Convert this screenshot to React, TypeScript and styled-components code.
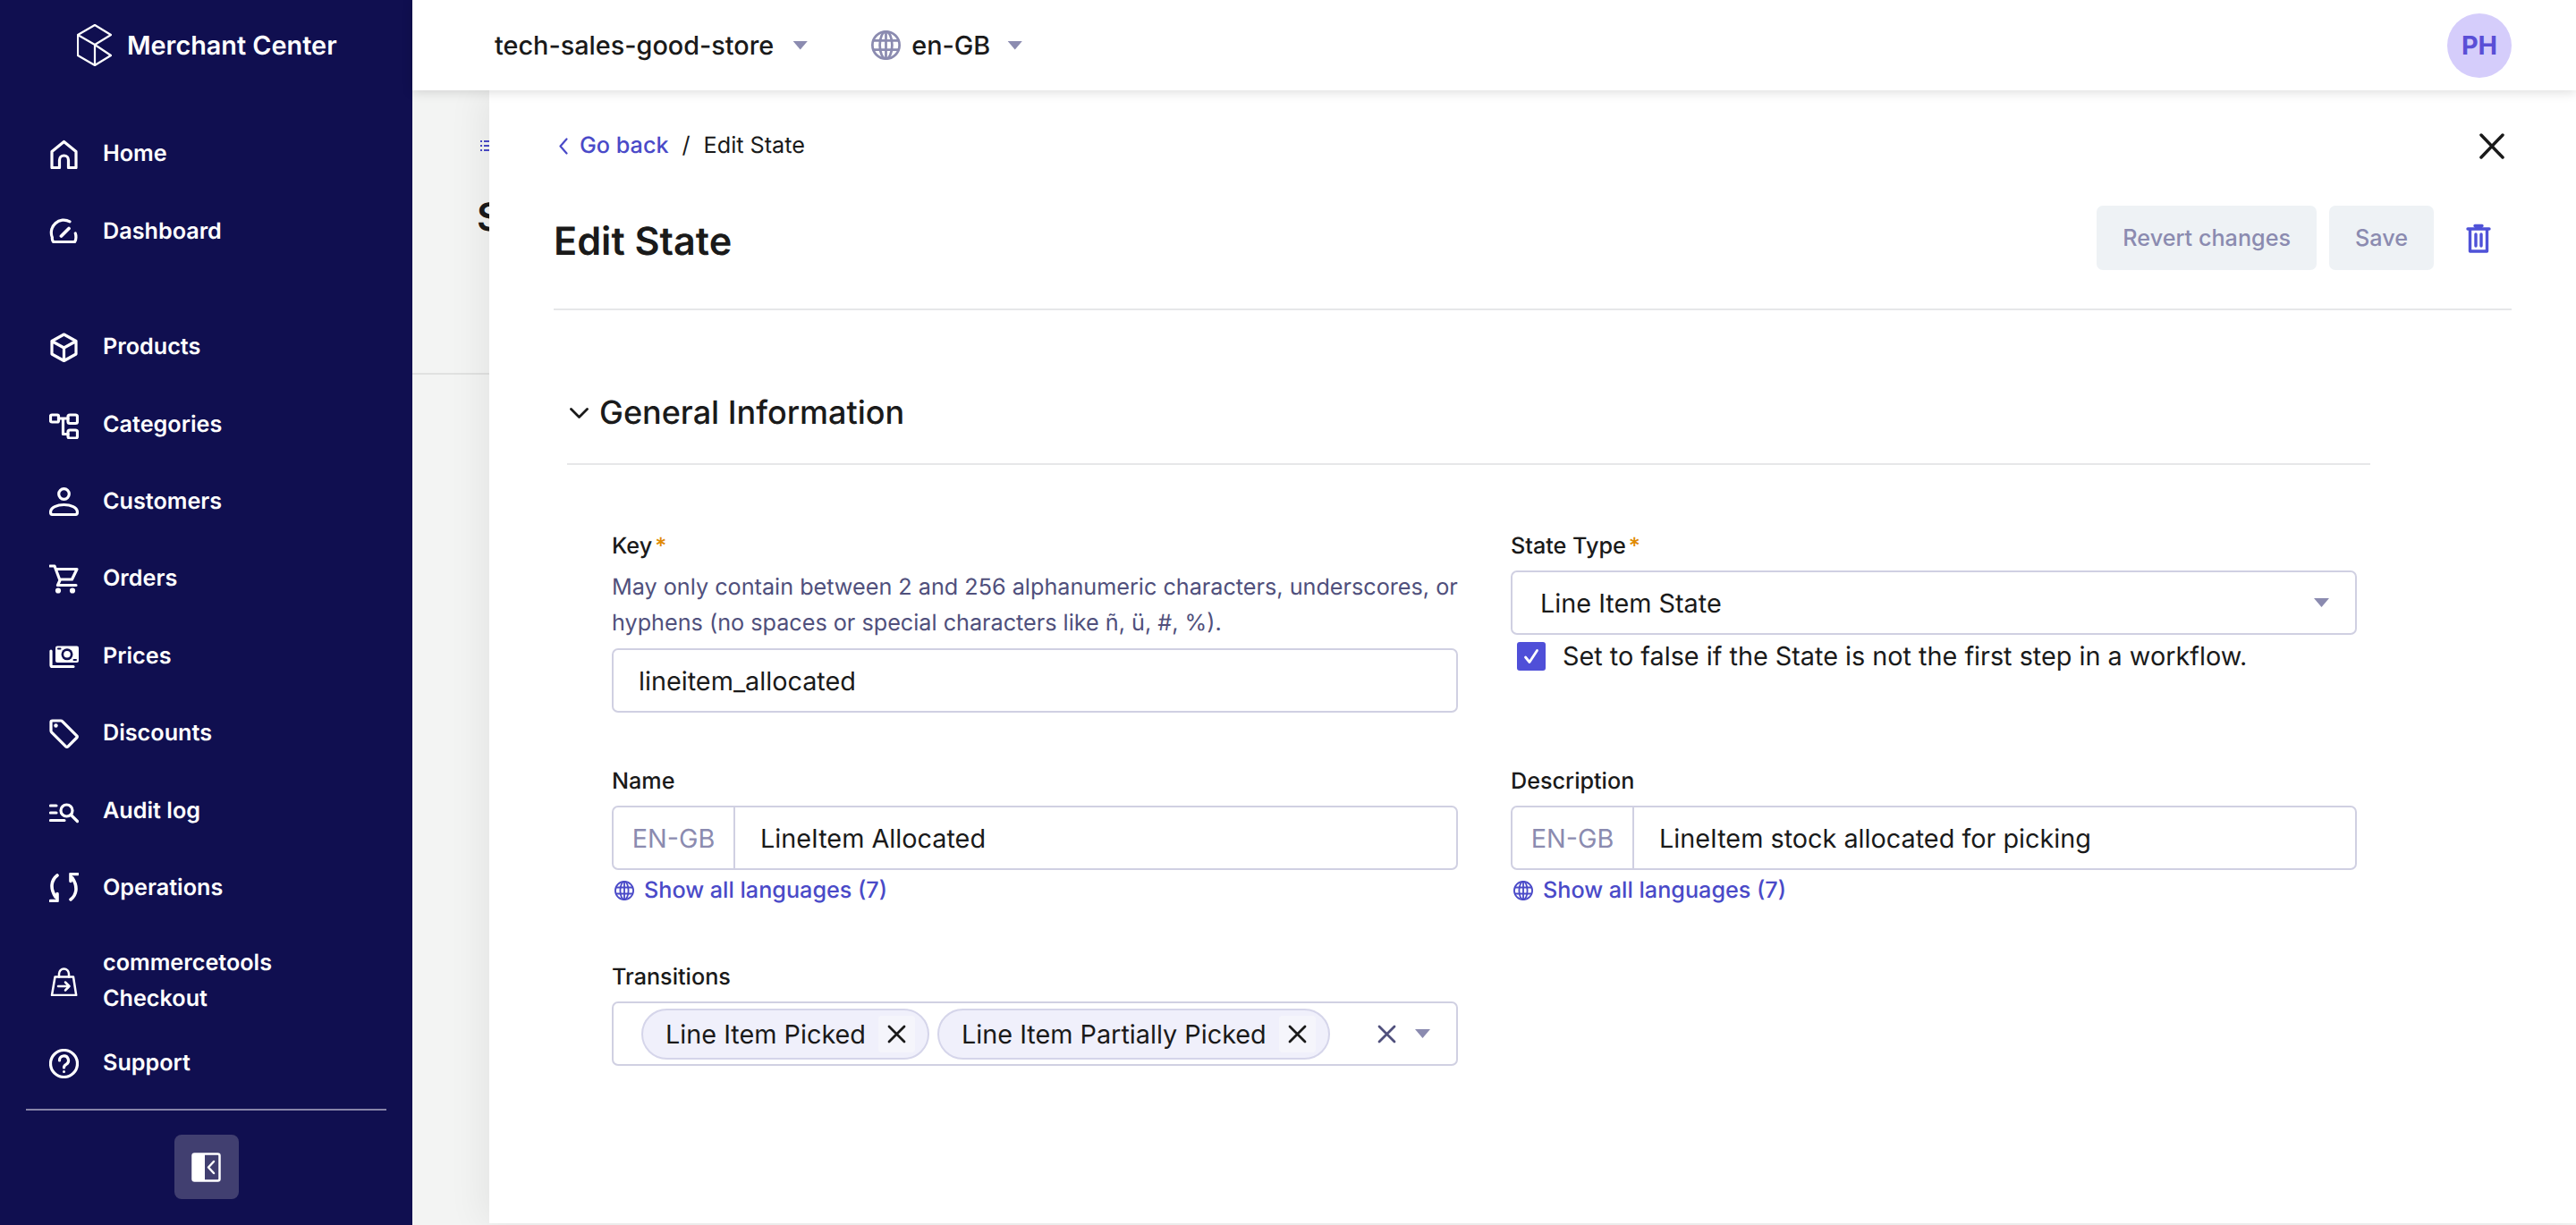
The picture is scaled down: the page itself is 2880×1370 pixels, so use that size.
import React from 'react';
import styled, { createGlobalStyle } from 'styled-components';

const GlobalStyle = createGlobalStyle`
  html, body {
    margin: 0;
    padding: 0;
    background: #f3f4f3;
  }
  * {
    box-sizing: border-box;
  }
  body {
    font-family: Inter, "Noto Sans", sans-serif;
    color: #1a1a1a;
    text-rendering: geometricPrecision;
    -webkit-font-smoothing: antialiased;
  }
`;

const Shell = styled.div`
  display: flex;
  width: 2880px;
  height: 1370px;
  overflow: hidden;
`;

const Sidebar = styled.aside`
  display: flex;
  flex: 0 0 461px;
  flex-direction: column;
  background: #100f50;
  color: #fff;
`;
const Brand = styled.div`
  display: flex;
  align-items: center;
  gap: 17px;
  height: 101px;
  padding-left: 86px;
`;
const BrandName = styled.span`
  font-size: 28.8px;
  font-weight: 600;
`;
const NavGroup = styled.nav<{ $top: number }>`
  display: flex;
  flex-direction: column;
  margin-top: ${(p) => p.$top}px;
`;
const NavRow = styled.a<{ $height?: number; $top?: number }>`
  display: flex;
  align-items: center;
  gap: 27px;
  height: ${(p) => p.$height ?? 86.4}px;
  margin-top: ${(p) => p.$top ?? 0}px;
  padding-left: 55px;
  font-size: 25.2px;
  font-weight: 600;
  line-height: 40px;
`;
const NavIcon = styled.svg`
  flex: none;
  width: 33px;
  height: 33px;
  fill: none;
  stroke: #fff;
  stroke-width: 3.2;
  stroke-linecap: round;
  stroke-linejoin: round;
`;
const SidebarFoot = styled.div`
  display: flex;
  justify-content: center;
  margin: 8px 29px 0;
  padding-top: 27px;
  border-top: 2px solid #8784a8;
`;
const CollapseButton = styled.button`
  display: flex;
  align-items: center;
  justify-content: center;
  width: 72px;
  height: 72px;
  padding: 0;
  border: 0;
  border-radius: 8px;
  background: #413f70;
`;

const Column = styled.div`
  display: flex;
  flex: 1;
  flex-direction: column;
  min-width: 0;
`;
const Header = styled.header`
  position: relative;
  z-index: 2;
  display: flex;
  flex: 0 0 101px;
  align-items: center;
  padding: 0 72px 0 92px;
  background: #fff;
  box-shadow: 0 2px 12px rgba(0, 0, 0, 0.14);
`;
const HeaderPicker = styled.div<{ $left?: number }>`
  display: flex;
  align-items: center;
  margin-left: ${(p) => p.$left ?? 0}px;
  font-size: 28.8px;
  font-weight: 500;
`;
const PickerLabel = styled.span`
  margin: 0 19px 0 12px;
`;
const StoreLabel = styled.span`
  margin-right: 21px;
`;
const Caret = styled.span`
  flex: none;
  width: 17px;
  height: 10px;
  background: #8b8bb0;
  clip-path: polygon(0 0, 100% 0, 50% 100%);
`;
const Avatar = styled.div`
  display: flex;
  align-items: center;
  justify-content: center;
  width: 72px;
  height: 72px;
  margin-left: auto;
  border-radius: 50%;
  background: #d5cdfb;
  color: #5a4fd6;
  font-size: 28.8px;
  font-weight: 700;
`;

const Main = styled.main`
  position: relative;
  flex: 1;
  min-height: 0;
`;
const PageBehind = styled.div`
  height: 318px;
  padding: 52px 0 0 76px;
  border-bottom: 2px solid #e0e1e0;
`;
const PageTitle = styled.div`
  margin: 44px 0 0 -4px;
  font-size: 43.2px;
  font-weight: 600;
`;
const Modal = styled.section`
  position: absolute;
  top: 0;
  right: 0;
  bottom: 2px;
  left: 86px;
  padding: 42px 72px 0;
  background: #fff;
  box-shadow: -6px 0 40px rgba(0, 0, 0, 0.07);
`;
const CloseButton = styled.svg`
  position: absolute;
  top: 48px;
  right: 80px;
  width: 28px;
  height: 29px;
  stroke: #1a1a1a;
  stroke-width: 3.5;
  stroke-linecap: round;
`;
const Breadcrumbs = styled.div`
  display: flex;
  align-items: center;
  height: 40px;
  padding-left: 6px;
  font-size: 25.2px;
  font-weight: 400;
`;
const BackLink = styled.a`
  display: flex;
  align-items: center;
  gap: 13px;
  color: #4a4ac8;
  font-weight: 500;
`;
const Crumb = styled.span`
  margin-left: 15px;
`;
const TitleRow = styled.div`
  display: flex;
  align-items: center;
  height: 164px;
  padding: 4px 23px 0 0;
  border-bottom: 2px solid #e6e7e9;
`;
const Title = styled.h1`
  flex: 1;
  margin: 8px 0 0;
  font-size: 43.2px;
  font-weight: 600;
`;
const GhostButton = styled.button`
  height: 72px;
  margin-right: 14px;
  padding: 0 29px;
  border: 0;
  border-radius: 7px;
  background: #eef2f5;
  color: #8b8bb0;
  font-family: inherit;
  font-size: 25.2px;
  font-weight: 500;
`;
const TrashIcon = styled.svg`
  width: 28px;
  height: 33px;
  margin-left: 22px;
  fill: none;
  stroke: #4f52d8;
  stroke-width: 3.4;
  stroke-linecap: round;
  stroke-linejoin: round;
`;

const Section = styled.div`
  margin: 0 158px 0 15px;
`;
const SectionHead = styled.div`
  display: flex;
  align-items: center;
  gap: 12px;
  height: 173px;
  padding: 56px 0 0 3px;
  border-bottom: 2px solid #e6e7e9;
`;
const SectionChevron = styled.svg`
  width: 21px;
  height: 12px;
  margin-top: 2px;
  fill: none;
  stroke: #1a1a1a;
  stroke-width: 2.8;
  stroke-linecap: round;
  stroke-linejoin: round;
`;
const SectionTitle = styled.h2`
  margin: 0;
  font-size: 36px;
  font-weight: 500;
`;
const FormGrid = styled.div`
  display: grid;
  grid-template-columns: 946px 946px;
  column-gap: 59px;
  row-gap: 57px;
  align-items: start;
  padding: 71px 0 0 50px;
`;
const Field = styled.div`
  display: flex;
  flex-direction: column;
`;
const Label = styled.label`
  height: 40px;
  margin-bottom: 7px;
  font-size: 25.2px;
  font-weight: 500;
  line-height: 40px;
`;
const Required = styled.span`
  margin-left: 3px;
  color: #e08a00;
`;
const HelpText = styled.p`
  margin: -1px 0 8px;
  color: #50507c;
  font-size: 25.2px;
  line-height: 40px;
`;
const InputBox = styled.div`
  display: flex;
  align-items: center;
  height: 72px;
  border: 2px solid #d0d0e2;
  border-radius: 7px;
  background: #fff;
  font-size: 28.8px;
  color: #1a1a1a;
`;
const TextInput = styled(InputBox)`
  padding: 0 28px;
`;
const SelectInput = styled(InputBox)`
  justify-content: space-between;
  padding: 0 29px 0 31px;
`;
const LocaleTag = styled.span`
  display: flex;
  flex: 0 0 136px;
  align-items: center;
  justify-content: center;
  height: 100%;
  border-right: 2px solid #d0d0e2;
  color: #8b8bb0;
`;
const LocaleValue = styled.span`
  padding-left: 28px;
`;
const LanguagesLink = styled.a`
  display: flex;
  align-items: center;
  gap: 11px;
  height: 41px;
  margin-top: 2px;
  padding-left: 3px;
  color: #4a4ac8;
  font-size: 25.2px;
  font-weight: 500;
`;
const CheckRow = styled.div`
  display: flex;
  align-items: center;
  gap: 19px;
  margin-top: 6px;
  padding-left: 7px;
  font-size: 28.8px;
`;
const CheckBox = styled.span`
  display: flex;
  flex: none;
  align-items: center;
  justify-content: center;
  width: 32px;
  height: 32px;
  border-radius: 3px;
  background: #4f4fd8;
`;
const ChipsInput = styled(InputBox)`
  gap: 9px;
  padding: 0 29px 0 31px;
`;
const Chip = styled.span`
  display: flex;
  align-items: center;
  gap: 14px;
  height: 57px;
  padding: 0 14px 0 25px;
  border: 2px solid #d5d5ea;
  border-radius: 29px;
  background: #f0f0fb;
`;
const ChipRemove = styled.span`
  display: flex;
  align-items: center;
  justify-content: center;
  width: 41px;
  height: 41px;
  border-radius: 4px;
  background: #f5f5fb;
`;
const ChipControls = styled.div`
  display: flex;
  align-items: center;
  gap: 21px;
  margin-left: auto;
`;
const XIcon = styled.svg<{ $color?: string }>`
  flex: none;
  width: 21px;
  height: 21px;
  stroke: ${(p) => p.$color ?? '#1a1a1a'};
  stroke-width: 2.8;
  stroke-linecap: round;
`;

function Globe({ size, color }: { size: number; color: string }) {
  return (
    <svg width={size} height={size} viewBox="0 0 24 24" fill="none" stroke={color} strokeWidth="2">
      <circle cx="12" cy="12" r="11" />
      <ellipse cx="12" cy="12" rx="5" ry="11" />
      <path d="M1.5 8.2h21M1.5 15.8h21M12 1v22" />
    </svg>
  );
}

function Cross() {
  return <path d="M2 2l17 17M19 2L2 19" />;
}

const dark = '#100f50';

const navIcons: Record<string, React.ReactNode> = {
  home: <path d="M3 31.5V13.5L16.5 2.5 30 13.5v18h-8.5V23a5 5 0 0 0-10 0v8.5z" />,
  dashboard: (
    <>
      <path d="M23 5.8A14 14 0 0 0 3.4 23.5q-.4 2.6 1.1 5h24q1.6-2.4 1.4-5.5 0-2.5-.6-4" />
      <path d="M13.5 22L22 13.5" strokeWidth="3.8" />
    </>
  ),
  products: <path d="M16.5 2L30 9.5V24l-13.5 7.5L3 24V9.5zM3 9.5l13.5 7.5L30 9.5M16.5 17v14.5" />,
  categories: (
    <>
      <rect x="1.5" y="6" width="9" height="8" rx="1.5" />
      <rect x="21" y="6" width="10.5" height="9.5" rx="2" />
      <rect x="21" y="23" width="10.5" height="9" rx="2" />
      <path d="M10.5 10H21M15.5 10v17.5H21" />
    </>
  ),
  customers: (
    <>
      <circle cx="16.5" cy="8.5" r="5.8" />
      <path d="M4 31.5q-2.5 0-2.5-2.5c0-5.5 7.5-8.5 15-8.5s15 3 15 8.5q0 2.5-2.5 2.5z" />
    </>
  ),
  orders: (
    <>
      <path d="M1 2h5l6 16-2.5 5.5H30M7.5 5.5H31L25.5 17H12" />
      <circle cx="10" cy="29.5" r="1.5" fill="#fff" />
      <circle cx="26" cy="29.5" r="1.5" fill="#fff" />
    </>
  ),
  prices: (
    <>
      <rect x="7" y="5.5" width="26" height="18.5" rx="2" fill="#fff" stroke="none" />
      <circle cx="20" cy="14.8" r="6.5" fill={dark} stroke="none" />
      <circle cx="20" cy="14.8" r="3.8" fill="#fff" stroke="none" />
      <path d="M10 8.5h2.5M27.5 21h2.5" stroke={dark} strokeWidth="2" />
      <path d="M2 11v16q0 1.5 1.5 1.5H27" />
    </>
  ),
  discounts: (
    <>
      <path d="M2 3.5Q2 2 3.5 2H13q1 0 1.8.8l16 16q1 1.2 0 2.2L21 30.8q-1.2 1.2-2.4 0l-16-16Q2 14 2 13z" />
      <circle cx="7.5" cy="7.5" r="2.2" fill="#fff" stroke="none" />
    </>
  ),
  audit: (
    <>
      <path d="M1.5 11H8M1.5 19H8M1.5 27.5H17" />
      <circle cx="19.5" cy="16.5" r="6.5" />
      <path d="M24.5 21.5L31.5 28.5" />
    </>
  ),
  operations: (
    <>
      <path d="M9 3C2.5 8 .5 17 7 27M1.5 31.5H9V23.5" strokeWidth="3.6" />
      <path d="M24 30c6.5-5 8.5-14 2-24M31.5 1.5H24v8" strokeWidth="3.6" />
    </>
  ),
  checkout: (
    <g strokeWidth="2.5">
      <path d="M11 11.5V8a5.5 5.5 0 0 1 11 0v3.5" />
      <path d="M6.5 11.5h20.5l3.2 20.5H3z" />
      <path d="M10 22h12.5M18 17.5l4.5 4.5-4.5 4.5" />
    </g>
  ),
  support: (
    <>
      <circle cx="16.5" cy="16.5" r="15" />
      <path d="M11.5 13a5 5 0 1 1 7.5 4.3c-1.8 1-2.5 2-2.5 3.7" />
      <circle cx="16.5" cy="25.5" r="1.5" fill="#fff" stroke="none" />
    </>
  ),
};

const firstGroup = [
  { icon: 'home', label: 'Home' },
  { icon: 'dashboard', label: 'Dashboard' },
];
const secondGroup = [
  { icon: 'products', label: 'Products' },
  { icon: 'categories', label: 'Categories' },
  { icon: 'customers', label: 'Customers' },
  { icon: 'orders', label: 'Orders' },
  { icon: 'prices', label: 'Prices' },
  { icon: 'discounts', label: 'Discounts' },
  { icon: 'audit', label: 'Audit log' },
  { icon: 'operations', label: 'Operations' },
];

function NavItem({ icon, label }: { icon: string; label: string }) {
  return (
    <NavRow>
      <NavIcon viewBox="0 0 33 33">{navIcons[icon]}</NavIcon>
      <span>{label}</span>
    </NavRow>
  );
}

function Side() {
  return (
    <Sidebar>
      <Brand>
        <svg width="39" height="47" viewBox="0 0 39 47" fill="none" stroke="#fff" strokeWidth="2.2" strokeLinejoin="round">
          <path d="M20 1l18 11-18 11L1 12zM1 12v23l19 11 18-11-18-12v23" />
        </svg>
        <BrandName>Merchant Center</BrandName>
      </Brand>
      <NavGroup $top={28}>
        {firstGroup.map((item) => (
          <NavItem key={item.label} {...item} />
        ))}
      </NavGroup>
      <NavGroup $top={43.2}>
        {secondGroup.map((item) => (
          <NavItem key={item.label} {...item} />
        ))}
        <NavRow $height={98} $top={12}>
          <NavIcon viewBox="0 0 33 33">{navIcons.checkout}</NavIcon>
          <span>
            commercetools
            <br />
            Checkout
          </span>
        </NavRow>
        <NavItem icon="support" label="Support" />
      </NavGroup>
      <SidebarFoot>
        <CollapseButton>
          <svg width="33" height="33" viewBox="0 0 33 33" fill="none" stroke="#fff" strokeWidth="2.5" strokeLinecap="round" strokeLinejoin="round">
            <rect x="1.5" y="1.5" width="30" height="30" rx="2" />
            <rect x="1" y="1" width="14" height="31" rx="1.5" fill="#fff" stroke="none" />
            <path d="M25 10l-6 6.5 6 6.5" />
          </svg>
        </CollapseButton>
      </SidebarFoot>
    </Sidebar>
  );
}

function TopBar() {
  return (
    <Header>
      <HeaderPicker>
        <StoreLabel>tech-sales-good-store</StoreLabel>
        <Caret />
      </HeaderPicker>
      <HeaderPicker $left={71}>
        <Globe size={33} color="#8b8bb0" />
        <PickerLabel>en-GB</PickerLabel>
        <Caret />
      </HeaderPicker>
      <Avatar>PH</Avatar>
    </Header>
  );
}

function LocalizedField({ label, value }: { label: string; value: string }) {
  return (
    <Field>
      <Label>{label}</Label>
      <InputBox>
        <LocaleTag>EN-GB</LocaleTag>
        <LocaleValue>{value}</LocaleValue>
      </InputBox>
      <LanguagesLink>
        <Globe size={22} color="#4a4ac8" />
        Show all languages (7)
      </LanguagesLink>
    </Field>
  );
}

function EditStateForm() {
  return (
    <FormGrid>
      <Field>
        <Label>
          Key<Required>*</Required>
        </Label>
        <HelpText>
          May only contain between 2 and 256 alphanumeric characters, underscores, or hyphens (no spaces or special
          characters like ñ, ü, #, %).
        </HelpText>
        <TextInput>lineitem_allocated</TextInput>
      </Field>
      <Field>
        <Label>
          State Type<Required>*</Required>
        </Label>
        <SelectInput>
          Line Item State
          <Caret />
        </SelectInput>
        <CheckRow>
          <CheckBox>
            <svg width="20" height="20" viewBox="0 0 20 20" fill="none" stroke="#fff" strokeWidth="2.8" strokeLinecap="round" strokeLinejoin="round">
              <path d="M3.5 11l4.5 5.5L16.5 3.5" />
            </svg>
          </CheckBox>
          Set to false if the State is not the first step in a workflow.
        </CheckRow>
      </Field>
      <LocalizedField label="Name" value="LineItem Allocated" />
      <LocalizedField label="Description" value="LineItem stock allocated for picking" />
      <Field>
        <Label>Transitions</Label>
        <ChipsInput>
          {['Line Item Picked', 'Line Item Partially Picked'].map((chip) => (
            <Chip key={chip}>
              {chip}
              <ChipRemove>
                <XIcon viewBox="0 0 21 21">
                  <Cross />
                </XIcon>
              </ChipRemove>
            </Chip>
          ))}
          <ChipControls>
            <XIcon viewBox="0 0 21 21" $color="#50507c">
              <Cross />
            </XIcon>
            <Caret />
          </ChipControls>
        </ChipsInput>
      </Field>
    </FormGrid>
  );
}

function EditStateModal() {
  return (
    <Modal>
      <CloseButton viewBox="0 0 28 29">
        <path d="M2 2l24 25M26 2L2 27" />
      </CloseButton>
      <Breadcrumbs>
        <BackLink>
          <svg width="10" height="19" viewBox="0 0 10 19" fill="none" stroke="#4a4ac8" strokeWidth="2.2" strokeLinecap="round" strokeLinejoin="round">
            <path d="M8.5 1.5L1.5 9.5l7 8" />
          </svg>
          Go back
        </BackLink>
        <Crumb>/</Crumb>
        <Crumb>Edit State</Crumb>
      </Breadcrumbs>
      <TitleRow>
        <Title>Edit State</Title>
        <GhostButton>Revert changes</GhostButton>
        <GhostButton>Save</GhostButton>
        <TrashIcon viewBox="0 0 28 33">
          <path d="M2 6h24M10 2.5h8M4.5 6v25h19V6M11 12v13M17 12v13" />
        </TrashIcon>
      </TitleRow>
      <Section>
        <SectionHead>
          <SectionChevron viewBox="0 0 21 12">
            <path d="M1.5 1.5l9 9 9-9" />
          </SectionChevron>
          <SectionTitle>General Information</SectionTitle>
        </SectionHead>
        <EditStateForm />
      </Section>
    </Modal>
  );
}

export default function App() {
  return (
    <>
      <GlobalStyle />
      <Shell>
        <Side />
        <Column>
          <TopBar />
          <Main>
            <PageBehind>
              <svg width="14" height="12" viewBox="0 0 14 12" fill="#4a4ac8">
                <path d="M0 0h2v2H0zM4 0h10v2H4zM0 5h2v2H0zM4 5h10v2H4zM0 10h2v2H0zM4 10h10v2H4z" />
              </svg>
              <PageTitle>S</PageTitle>
            </PageBehind>
            <EditStateModal />
          </Main>
        </Column>
      </Shell>
    </>
  );
}
